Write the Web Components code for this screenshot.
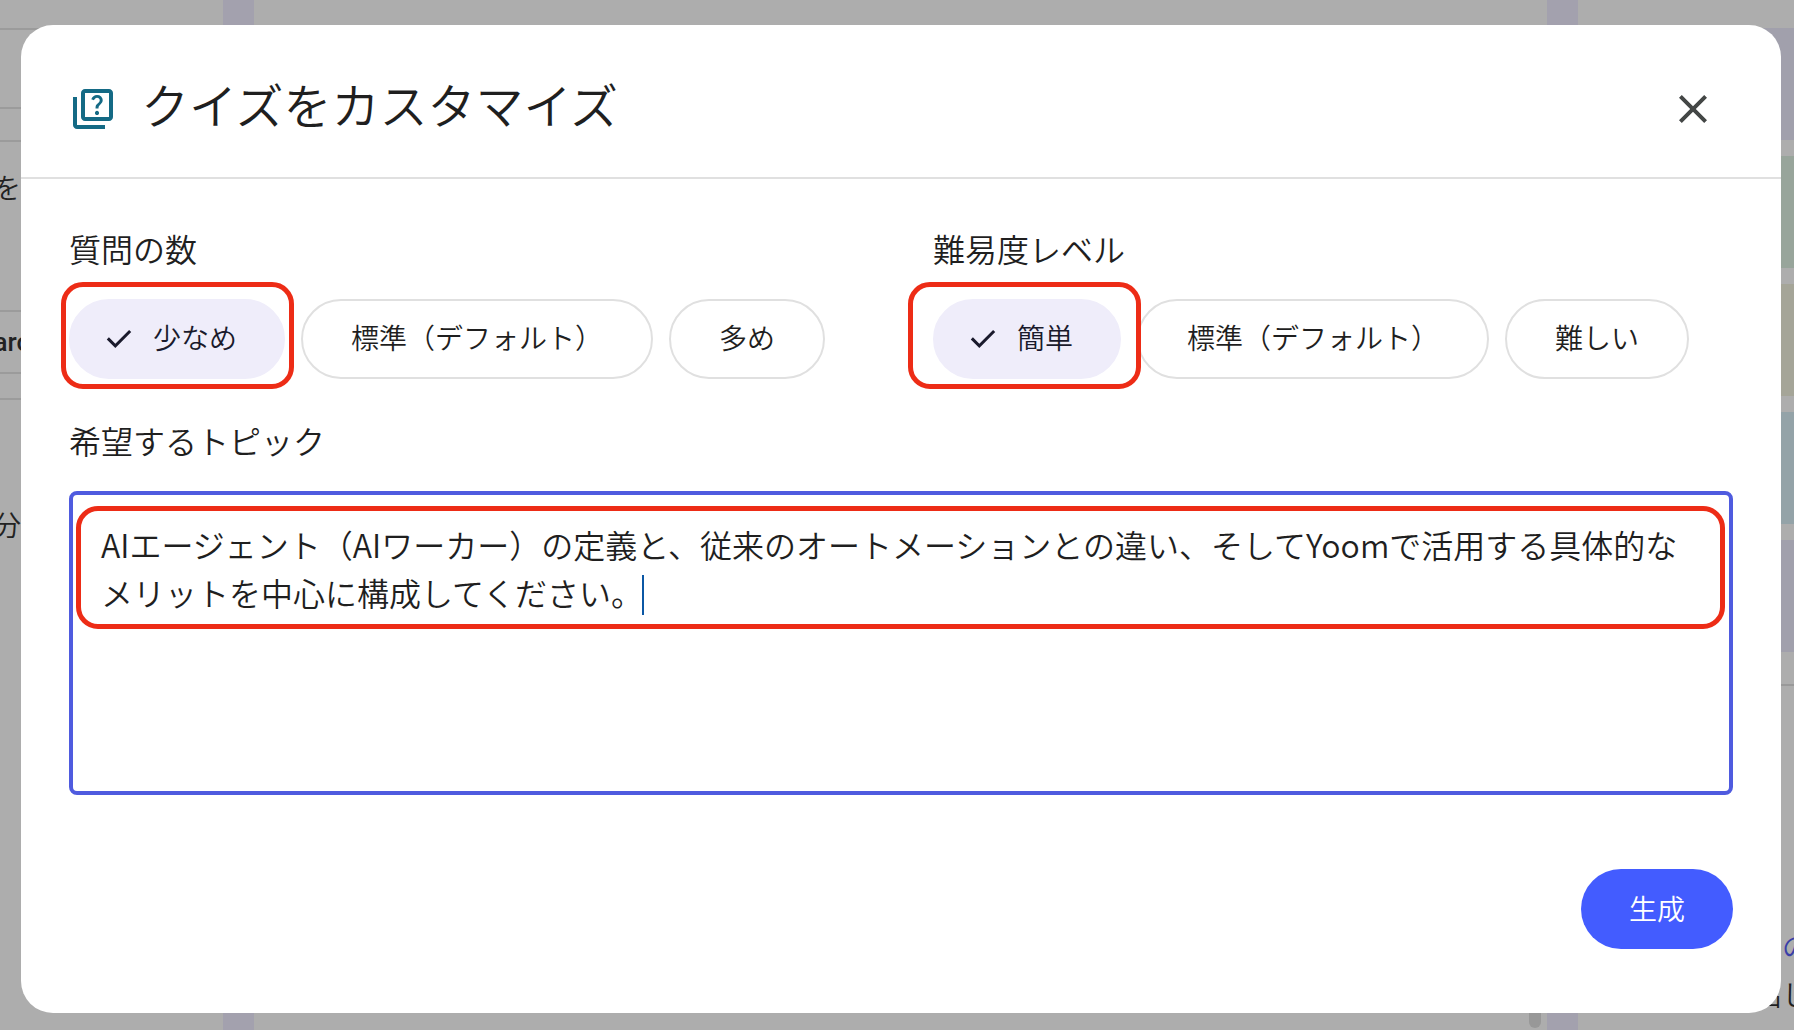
<!DOCTYPE html>
<html lang="ja">
<head>
<meta charset="utf-8">
<meta name="viewport" content="width=device-width, initial-scale=1">
<title>クイズをカスタマイズ</title>
<style>
  html, body { margin: 0; height: 100%; }
  body {
    font-family: "Noto Sans CJK JP", sans-serif;
    font-weight: 350;
    color: #1f1f1f;
    background: #adadad;
    overflow: hidden;
  }
</style>
</head>
<body>
<quiz-app></quiz-app>
<script>
const define = (name, html, setup) => {
  const tpl = document.createElement('template');
  tpl.innerHTML = html;
  customElements.define(name, class extends HTMLElement {
    constructor() {
      super();
      this.attachShadow({ mode: 'open' }).append(tpl.content.cloneNode(true));
      if (setup) setup.call(this, this.shadowRoot);
    }
  });
};

/* Dimmed notebook page behind the dialog */
define('page-backdrop', `
<style>
  :host { display: grid; grid-template-columns: 223px 31px 1fr 31px 216px; height: 100%; background: #adadad; overflow: hidden; }
  .gutter { background: #a3a1ae; }
  .left { display: flex; flex-direction: column; padding-top: 28px; }
  .left div { box-sizing: border-box; border-top: 2px solid #9b9b9b; display: flex; align-items: center; width: 100%; }
  .left span { display: flex; justify-content: flex-end; white-space: nowrap; width: 21px; padding-bottom: 4px; font-size: 28px; line-height: 40px; color: #222; }
  .left .latin { width: 30px; padding: 0; font-size: 26px; font-weight: 500; font-family: Roboto, sans-serif; }
  .centre { display: flex; align-items: flex-end; justify-content: flex-end; padding: 0 6px 2px 0; }
  .thumb { width: 12px; height: 32px; border-radius: 6px; background: #989898; }
  .right { display: flex; flex-direction: column; gap: 16px; padding: 28px 0 0 24px; }
  .tile { height: 112px; flex: none; }
  .a { background: #a1a0ac; } .b { background: #98a59b; } .c { background: #a5a598; }
  .d { background: #94a3a8; }
  hr { border: 0; border-top: 2px solid #999; margin: 16px 0 0; width: 100%; }
  .more { display: flex; flex-direction: column; padding: 220px 0 0 152px; font-size: 28px; line-height: 48px; white-space: nowrap; }
  .more a { color: #3a3fa8; text-decoration: none; padding-left: 28px; }
  .more p { margin: 0; }
</style>
<div class="left">
  <div style="height:79px"></div>
  <div style="height:33px"></div>
  <div style="height:170px;padding-bottom:74px"><span>を</span></div>
  <div style="height:62px"><span class="latin">arc</span></div>
  <div style="height:26px"></div>
  <div style="height:254px"><span>分</span></div>
</div>
<div class="gutter"></div>
<div class="centre"><div class="thumb"></div></div>
<div class="gutter"></div>
<div class="right">
  <div class="tile a"></div><div class="tile b"></div><div class="tile c"></div>
  <div class="tile d"></div><div class="tile a"></div><hr>
  <div class="more"><a href="#">の</a><p>出し</p></div>
</div>`);

/* Red annotation frame laid over its positioned parent */
define('mark-frame', `
<style>
  :host { position: absolute; z-index: 2; inset: var(--frame-inset, -17px -9px -10px -8px); box-sizing: border-box; border: 5px solid #ed2c16; border-radius: 22px; pointer-events: none; }
</style>`);

define('option-chip', `
<style>
  :host { display: block; position: relative; flex: none; }
  button { box-sizing: border-box; height: 80px; display: flex; align-items: center; gap: 16px; margin: 0; padding: 0 48px; border: 2px solid #e0e0e0; border-radius: 40px; background: #fff; color: #1f1f1f; font: inherit; font-size: 28px; line-height: 40px; white-space: nowrap; cursor: pointer; }
  span { padding-bottom: 4px; }
  svg { display: none; width: 36px; height: 36px; fill: currentColor; }
  :host([selected]) button { border-color: #efedfa; background: #efedfa; color: #1a1a2c; padding: 0 46px 0 30px; }
  :host([selected]) svg { display: block; }
</style>
<button type="button"><svg viewBox="0 -960 960 960" aria-hidden="true"><path d="M382-240 154-468l57-57 171 171 367-367 57 57-424 424Z"/></svg><span><slot></slot></span></button>
<slot name="mark"></slot>`);

define('option-group', `
<style>
  :host { display: flex; flex-direction: column; gap: 28px; min-width: 0; }
  h2 { margin: 0; font-size: 32px; line-height: 46px; font-weight: inherit; }
  .chips { display: flex; gap: 16px; }
</style>
<h2><slot name="label"></slot></h2>
<div class="chips" role="group"><slot></slot></div>`, function () {
  this.addEventListener('click', e => {
    const chip = e.target.closest('option-chip');
    if (chip) for (const c of this.querySelectorAll('option-chip')) c.toggleAttribute('selected', c === chip);
  });
});

define('topic-field', `
<style>
  :host { display: flex; flex-direction: column; gap: 28px; }
  label { font-size: 32px; line-height: 46px; }
  .box { position: relative; display: flex; }
  textarea { box-sizing: border-box; flex: 1; height: 304px; margin: 0; padding: 25px 28px; border: 4px solid #4f5bdf; border-radius: 8px; outline: 0; resize: none; background: #fff; color: inherit; font: inherit; font-size: 32px; line-height: 48px; caret-color: transparent; overflow: hidden; }
  .caret { position: absolute; left: 573px; top: 84px; width: 2px; height: 40px; background: #0b57a4; }
  mark-frame { --frame-inset: 15px 8px 166px 7px; }
</style>
<label for="topic">希望するトピック</label>
<div class="box">
  <textarea id="topic">AIエージェント（AIワーカー）の定義と、従来のオートメーションとの違い、そしてYoomで活用する具体的なメリットを中心に構成してください。</textarea>
  <div class="caret"></div>
  <mark-frame></mark-frame>
</div>`);

define('dialog-header', `
<style>
  :host { display: flex; align-items: center; gap: 24px; padding: 48px 48px 32px; border-bottom: 2px solid #e0e0e0; }
  .quiz { width: 48px; height: 48px; fill: #146a85; flex: none; }
  h1 { flex: 1; align-self: flex-start; margin: 0; font-size: 48px; line-height: 60px; font-weight: inherit; }
  button { display: flex; align-items: center; justify-content: center; width: 80px; height: 72px; padding: 0; border: 0; background: none; color: #444746; cursor: pointer; }
  button svg { width: 48px; height: 48px; fill: currentColor; }
</style>
<svg class="quiz" viewBox="0 -960 960 960" aria-hidden="true"><path d="M560-360q17 0 29.500-12.500T602-402q0-17-12.500-29.500T560-444q-17 0-29.500 12.500T518-402q0 17 12.500 29.500T560-360Zm-30-128h60q0-29 6-42.500t28-35.500q30-30 40-48.500t10-43.500q0-45-31.500-73.500T560-760q-41 0-71.500 23T446-676l54 22q9-25 24.500-37.500T560-704q24 0 39 13.500t15 36.500q0 14-8 26.500T578-596q-33 29-40.500 45.500T530-488ZM320-240q-33 0-56.500-23.500T240-320v-480q0-33 23.500-56.500T320-880h480q33 0 56.500 23.500T880-800v480q0 33-23.500 56.500T800-240H320Zm0-80h480v-480H320v480ZM160-80q-33 0-56.500-23.500T80-160v-560h80v560h560v80H160Z"/></svg>
<h1><slot></slot></h1>
<button type="button" aria-label="閉じる"><svg viewBox="0 -960 960 960" aria-hidden="true"><path d="m256-200-56-56 224-224-224-224 56-56 224 224 224-224 56 56-224 224 224 224-56 56-224-224-224 224Z"/></svg></button>`);

define('primary-button', `
<style>
  :host { display: block; }
  button { height: 80px; margin: 0; padding: 0 48px 2px; border: 0; border-radius: 40px; background: #435cff; color: #fff; font: inherit; font-size: 28px; line-height: 40px; cursor: pointer; }
</style>
<button type="button"><slot></slot></button>`);

define('quiz-dialog', `
<style>
  :host { display: block; background: #fff; border-radius: 32px; overflow: hidden; }
  .body { display: flex; flex-direction: column; gap: 38px; padding: 46px 48px 64px; }
  .options { display: grid; grid-template-columns: 1fr 1fr; gap: 64px; }
  .actions { display: flex; justify-content: flex-end; padding-top: 36px; }
  .wide { --frame-inset: -17px -20px -10px -25px; }
</style>
<dialog-header>クイズをカスタマイズ</dialog-header>
<div class="body">
  <div class="options">
    <option-group>
      <span slot="label">質問の数</span>
      <option-chip selected>少なめ<mark-frame slot="mark"></mark-frame></option-chip>
      <option-chip>標準（デフォルト）</option-chip>
      <option-chip>多め</option-chip>
    </option-group>
    <option-group>
      <span slot="label">難易度レベル</span>
      <option-chip selected>簡単<mark-frame slot="mark" class="wide"></mark-frame></option-chip>
      <option-chip>標準（デフォルト）</option-chip>
      <option-chip>難しい</option-chip>
    </option-group>
  </div>
  <topic-field></topic-field>
  <div class="actions"><primary-button>生成</primary-button></div>
</div>`);

define('quiz-app', `
<style>
  :host { display: grid; height: 100vh; }
  page-backdrop, .layer { grid-area: 1 / 1; min-width: 0; min-height: 0; }
  .layer { z-index: 1; padding: 25px 13px 17px 21px; }
</style>
<page-backdrop></page-backdrop>
<div class="layer"><quiz-dialog role="dialog" aria-modal="true" aria-label="クイズをカスタマイズ"></quiz-dialog></div>`);
</script>
</body>
</html>
